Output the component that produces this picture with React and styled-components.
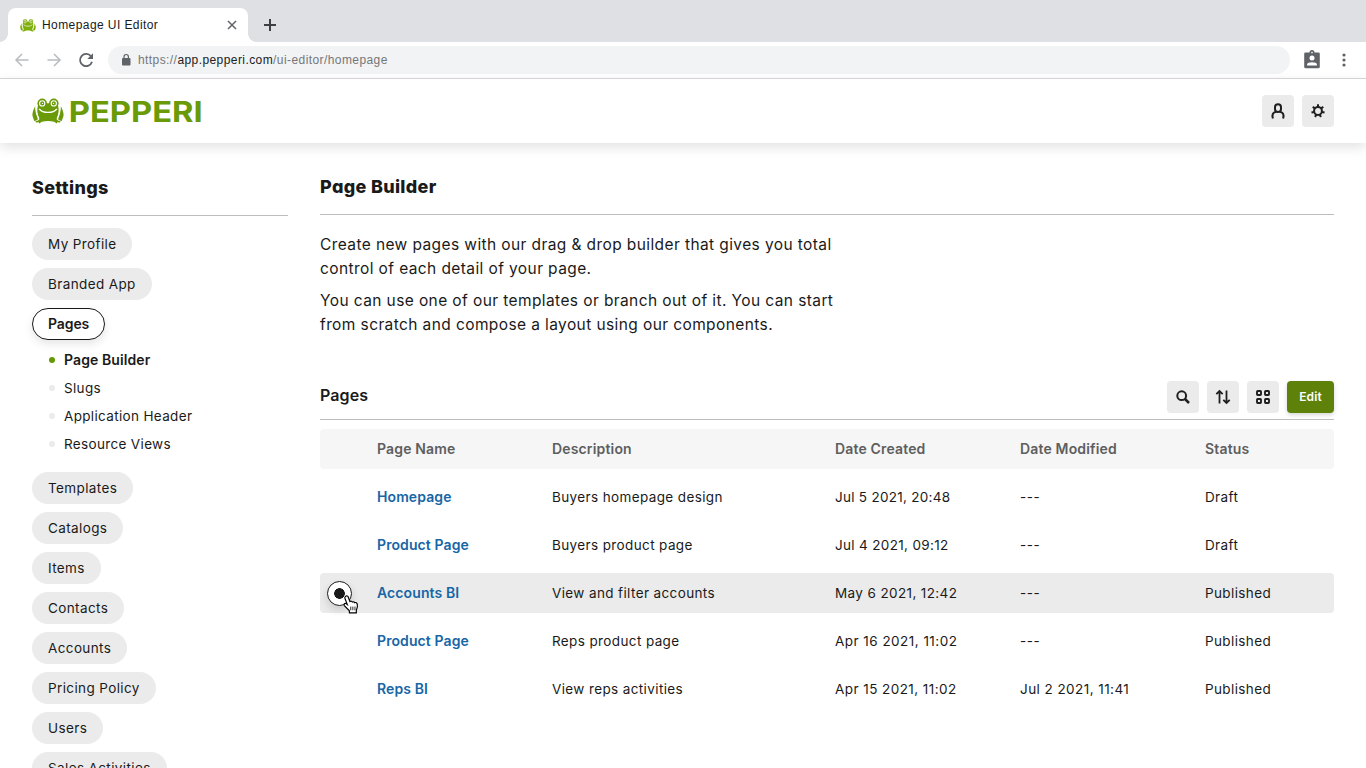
import React from 'react';
import styled, { createGlobalStyle, css } from 'styled-components';

const Global = createGlobalStyle`
  * { box-sizing: border-box; }
  html, body { margin: 0; height: 768px; overflow: hidden; background: #fff; }
  body { font-family: Inter, 'Liberation Sans', sans-serif; color: #1a1a1a; }
  h1, h2, p, ul { margin: 0; padding: 0; font-weight: inherit; }
`;

const Window = styled.div`
  width: 1366px;
  height: 768px;
  overflow: hidden;
  display: flex;
  flex-direction: column;
`;

/* Browser chrome */
const TabStrip = styled.div`
  flex: none;
  height: 42px;
  padding: 8px 0 0 8px;
  display: flex;
  align-items: flex-start;
  background: #dee0e4;
`;
const Tab = styled.div`
  position: relative;
  width: 240px;
  height: 34px;
  padding: 0 10px 0 12px;
  display: flex;
  align-items: center;
  background: #fff;
  border-radius: 8px 8px 0 0;
  &::before, &::after {
    content: '';
    position: absolute;
    bottom: 0;
    width: 8px;
    height: 8px;
  }
  &::before { left: -8px; background: radial-gradient(circle at 0 0, transparent 7.5px, #fff 8px); }
  &::after { right: -8px; background: radial-gradient(circle at 100% 0, transparent 7.5px, #fff 8px); }
`;
const TabTitle = styled.span`
  flex: 1;
  margin-left: 6px;
  font: 12px/16px 'Liberation Sans', Arial, sans-serif;
  letter-spacing: 0.42px;
  white-space: nowrap;
`;
const NewTab = styled.div`
  margin: 9px 0 0 14px;
  display: flex;
`;
const Toolbar = styled.div`
  flex: none;
  height: 37px;
  padding: 0 12px 0 12px;
  display: flex;
  align-items: center;
  background: #fff;
  border-bottom: 1px solid #d9d9db;
`;
const NavIcons = styled.div`
  width: 96px;
  display: flex;
  gap: 12px;
`;
const AddressBar = styled.div`
  width: 1182px;
  height: 28px;
  padding-left: 12px;
  display: flex;
  align-items: center;
  gap: 6px;
  border-radius: 14px;
  background: #f1f3f4;
`;
const Url = styled.span`
  font: 12px/16px 'Liberation Sans', Arial, sans-serif;
  letter-spacing: 0.42px;
  color: #757779;
  white-space: nowrap;
  b { font-weight: 400; color: #202124; }
`;
const ChromeActions = styled.div`
  margin-left: 12px;
  display: flex;
  gap: 12px;
`;

/* Application header */
const Header = styled.header`
  position: relative;
  flex: none;
  height: 64px;
  padding: 0 32px;
  display: flex;
  align-items: center;
  justify-content: space-between;
  background: #fff;
  box-shadow: 0 4px 12px rgba(0, 0, 0, 0.12);
`;
const Actions = styled.div`
  display: flex;
  gap: 8px;
`;
const IconButton = styled.button`
  width: 32px;
  height: 32px;
  padding: 0;
  border: 0;
  border-radius: 4px;
  display: flex;
  align-items: center;
  justify-content: center;
  background: #ebebeb;
`;
const EditButton = styled.button`
  width: 47px;
  height: 32px;
  padding: 0;
  border: 0;
  border-radius: 4px;
  background: #5d8109;
  box-shadow: 0 2px 4px rgba(0, 0, 0, 0.16);
  color: #fff;
  font: 600 12px/16px Inter, sans-serif;
  letter-spacing: 0.15px;
`;

const Body = styled.div`
  flex: 1;
  min-height: 0;
  padding: 0 32px;
  display: flex;
  gap: 32px;
`;
const Heading = styled.h1`
  font: 800 18px/24px Inter, sans-serif;
  font-feature-settings: 'cv11';
  letter-spacing: 0.32px;
`;

/* Sidebar */
const Sidebar = styled.aside`
  flex: none;
  width: 256px;
  padding-top: 33px;
`;
const SideTitle = styled.div`
  height: 40px;
  margin-bottom: 12px;
  border-bottom: 1px solid #bdbdbd;
`;
const PillList = styled.nav`
  display: flex;
  flex-direction: column;
  align-items: flex-start;
  gap: 8px;
`;
const Pill = styled.a`
  flex: none;
  height: 32px;
  padding: 0 16px;
  border-radius: 16px;
  background: #ebebeb;
  font-size: 13.5px;
  line-height: 32px;
  letter-spacing: 0.38px;
  white-space: nowrap;
  ${p => p.$active && css`
    padding: 0 15px;
    border: 1px solid #1a1a1a;
    background: #fff;
    line-height: 30px;
    font-size: 14px;
    font-weight: 600;
    letter-spacing: -0.1px;
    box-shadow: 0 4px 8px rgba(0, 0, 0, 0.1);
  `}
`;
const SubList = styled.div`
  padding: 0 0 6px 17px;
  margin-top: -2px;
  display: flex;
  flex-direction: column;
`;
const SubItem = styled.a`
  height: 28px;
  display: flex;
  align-items: center;
  gap: 9px;
  font-size: ${p => (p.$active ? 14 : 13.5)}px;
  line-height: 16px;
  font-weight: ${p => (p.$active ? 600 : 400)};
  letter-spacing: ${p => (p.$active ? 0.1 : 0.34)}px;
  &::before {
    content: '';
    width: 6px;
    height: 6px;
    border-radius: 50%;
    background: ${p => (p.$active ? '#669900' : '#ebebeb')};
  }
`;

/* Main column */
const Main = styled.main`
  flex: 1;
  padding-top: 32px;
`;
const MainTitle = styled.div`
  height: 40px;
  border-bottom: 1px solid #bdbdbd;
`;
const Intro = styled.div`
  padding-top: 18px;
  display: flex;
  flex-direction: column;
  gap: 8px;
  height: 158px;
  font-size: 15.5px;
  line-height: 24px;
  letter-spacing: 0.4px;
  white-space: nowrap;
`;
const ListHeader = styled.div`
  height: 47px;
  padding-top: 8px;
  display: flex;
  justify-content: space-between;
  align-items: flex-start;
  border-bottom: 1px solid #bdbdbd;
`;
const ListTitle = styled.h2`
  font: 600 16px/29px Inter, sans-serif;
  letter-spacing: 0.12px;
`;
const Table = styled.div`
  padding-top: 9px;
  display: flex;
  flex-direction: column;
  gap: 8px;
`;
const Row = styled.div`
  height: 40px;
  display: grid;
  grid-template-columns: 57px 175px 283px 185px 185px 1fr;
  align-items: center;
  border-radius: 4px;
  font-size: 13.5px;
  line-height: 16px;
  letter-spacing: 0.38px;
  white-space: nowrap;
  background: ${p => (p.$selected ? '#ebebeb' : 'transparent')};
  ${p => p.$head && css`
    background: #f6f6f6;
    color: #5e5e5e;
    font-size: 14px;
    font-weight: 600;
    letter-spacing: 0.16px;
  `}
`;
const DateCell = styled.span`
  letter-spacing: ${p => p.$tracking}px;
`;
const PageLink = styled.a`
  color: #1766a6;
  font-size: 14px;
  font-weight: 600;
  letter-spacing: 0.1px;
`;
const RadioCell = styled.div`
  position: relative;
  padding-left: 7px;
`;
const Radio = styled.div`
  width: 25px;
  height: 25px;
  border: 1px solid #1a1a1a;
  border-radius: 50%;
  background: radial-gradient(circle, #1a1a1a 5px, #fff 5.6px);
  box-shadow: 0 4px 8px rgba(0, 0, 0, 0.14);
`;
const Pointer = styled.svg`
  position: absolute;
  left: 23px;
  top: 14px;
`;

function Frog({ width, height, color = '#6a9a08' }) {
  return (
    <svg width={width} height={height} viewBox="0 0 32 26" fill={color}>
      <circle cx="10.200" cy="5.400" r="4.800" />
      <circle cx="21.800" cy="5.400" r="4.800" />
      <path d="M6 7.500C8 4.500 24 4.500 26 7.500c1.300 4 .8 9-1.200 12.500-.4 1.400.3 2.300 1.700 2.800l2.300.7-.8 1-2.600-.2-.8 1.100-2.400-1.600c-4-1.100-8.400-1.100-12.400 0l-2.400 1.600-.8-1.100-2.600.2-.8-1 2.300-.7c1.400-.5 2.100-1.400 1.700-2.800C5.200 16.500 4.700 11.500 6 7.500z" />
      <path d="M3.200 8.300C1.800 11 .4 14 .4 17c.1 2 1.400 4 1.800 6l2.800-.8c1-.8.8-1.800.4-2.800C3.900 16 3 12.500 3.200 8.300zM28.800 8.300C30.200 11 31.600 14 31.600 17c-.1 2-1.400 4-1.800 6l-2.800-.8c-1-.8-.8-1.800-.4-2.800 1.500-3.400 2.400-6.900 2.200-11.100z" />
      <g fill="none" stroke="#fff">
        <path d="M4.400 9c-.2 4 .3 7 1.900 10.300M27.600 9c.2 4-.3 7-1.900 10.300" strokeWidth=".9" />
        <circle cx="10.200" cy="5.400" r="2.600" strokeWidth="1.100" />
        <circle cx="21.800" cy="5.400" r="2.600" strokeWidth="1.100" />
        <path d="M7.200 10.800c3.600 4.800 14 4.800 17.600 0" strokeWidth="1.400" />
      </g>
      <circle cx="10.500" cy="5.400" r=".7" fill="#fff" />
      <circle cx="21.500" cy="5.400" r=".7" fill="#fff" />
    </svg>
  );
}

const Wordmark = styled.svg`
  display: block;
  text { font: 700 29px Inter, sans-serif; fill: #6a9a08; }
`;
const Brand = styled.div`
  display: flex;
  align-items: center;
  gap: 4px;
`;

const before = ['My Profile', 'Branded App'];
const after = ['Templates', 'Catalogs', 'Items', 'Contacts', 'Accounts', 'Pricing Policy', 'Users', 'Sales Activities'];
const rows = [
  { name: 'Homepage', text: 'Buyers homepage design', created: 'Jul 5 2021, 20:48', tracking: 0.28, status: 'Draft' },
  { name: 'Product Page', text: 'Buyers product page', created: 'Jul 4 2021, 09:12', tracking: 0.33, status: 'Draft' },
  { name: 'Accounts BI', text: 'View and filter accounts', created: 'May 6 2021, 12:42', tracking: 0.38, status: 'Published' },
  { name: 'Product Page', text: 'Reps product page', created: 'Apr 16 2021, 11:02', tracking: 0.47, status: 'Published' },
  { name: 'Reps BI', text: 'View reps activities', created: 'Apr 15 2021, 11:02', modified: 'Jul 2 2021, 11:41', tracking: 0.44, status: 'Published' },
];

const stroke = { fill: 'none', stroke: '#1f1f1f', strokeWidth: 2 };

export default function App() {
  return (
    <Window>
      <Global />
      <TabStrip>
        <Tab>
          <Frog width={16} height={15} color="#7fae0a" />
          <TabTitle>Homepage UI Editor</TabTitle>
          <svg width="12" height="12" viewBox="0 0 12 12" fill="none" stroke="#5f6368" strokeWidth="1.500"><path d="M2 2l8 8M10 2l-8 8" /></svg>
        </Tab>
        <NewTab><svg width="16" height="16" viewBox="0 0 16 16" stroke="#3c4043" strokeWidth="2"><path d="M8 2v12M2 8h12" /></svg></NewTab>
      </TabStrip>
      <Toolbar>
        <NavIcons>
          <svg width="20" height="20" viewBox="0 0 20 20" fill="none" stroke="#babcbe" strokeWidth="1.500"><path d="M16.500 10H4M10 4l-6 6 6 6" /></svg>
          <svg width="20" height="20" viewBox="0 0 20 20" fill="none" stroke="#babcbe" strokeWidth="1.500"><path d="M3.500 10H16M10 4l6 6-6 6" /></svg>
          <svg width="20" height="20" viewBox="0 0 20 20"><path d="M15 6.300A6.100 6.100 0 1 0 16 11.800" fill="none" stroke="#5f6368" strokeWidth="1.800" /><path d="M17 3.300V9h-5.700z" fill="#5f6368" /></svg>
        </NavIcons>
        <AddressBar>
          <svg width="12" height="14" viewBox="0 0 12 14"><rect x="2" y="5" width="8.500" height="7.500" rx="1" fill="#5f6368" /><path d="M4 5.500V3.700a2.200 2.200 0 0 1 4.400 0v1.800" fill="none" stroke="#5f6368" strokeWidth="1.200" /></svg>
          <Url>https://<b>app.pepperi.com</b>/ui-editor/homepage</Url>
        </AddressBar>
        <ChromeActions>
          <svg width="20" height="20" viewBox="0 0 20 20"><path d="M3.500 2.500h4a2.500 2.500 0 0 1 5 0h4A1.300 1.300 0 0 1 17.800 3.800v13a1.500 1.500 0 0 1-1.500 1.500H3.700a1.500 1.500 0 0 1-1.500-1.500v-13A1.300 1.300 0 0 1 3.500 2.500z" fill="#5f6368" /><circle cx="10" cy="2.600" r=".8" fill="#fff" /><circle cx="10" cy="8" r="2.500" fill="#fff" /><path d="M5 15.500v-1c0-3 10-3 10 0v1z" fill="#fff" /></svg>
          <svg width="20" height="20" viewBox="0 0 20 20" fill="#5f6368"><circle cx="10" cy="5" r="1.600" /><circle cx="10" cy="10" r="1.600" /><circle cx="10" cy="15" r="1.600" /></svg>
        </ChromeActions>
      </Toolbar>
      <Header>
        <Brand>
          <Frog width={32} height={26} />
          <Wordmark width="140" height="36" viewBox="0 0 140 36"><text x="0.700" y="28.500" textLength="134" lengthAdjust="spacingAndGlyphs">PEPPERI</text></Wordmark>
        </Brand>
        <Actions>
          <IconButton>
            <svg width="16" height="16" viewBox="0 0 16 16" {...stroke}><rect x="5" y="1.300" width="6" height="7.600" rx="3" /><path d="M2.900 15.500C1.700 11.500 3 9.300 6.200 8.700M13.100 15.500c1.200-4-.1-6.200-3.300-6.800" /></svg>
          </IconButton>
          <IconButton>
            <svg width="16" height="16" viewBox="0 0 16 16" {...stroke}><circle cx="8" cy="8" r="3.900" />{[0, 51.4, 102.8, 154.300, 205.700, 257.100, 308.600].map(a => <path key={a} d="M8 1.300v2.500" transform={`rotate(${a} 8 8)`} />)}</svg>
          </IconButton>
        </Actions>
      </Header>
      <Body>
        <Sidebar>
          <SideTitle><Heading>Settings</Heading></SideTitle>
          <PillList>
            {before.map(t => <Pill key={t}>{t}</Pill>)}
            <Pill $active>Pages</Pill>
            <SubList>
              <SubItem $active>Page Builder</SubItem>
              <SubItem>Slugs</SubItem>
              <SubItem>Application Header</SubItem>
              <SubItem>Resource Views</SubItem>
            </SubList>
            {after.map(t => <Pill key={t}>{t}</Pill>)}
          </PillList>
        </Sidebar>
        <Main>
          <MainTitle><Heading>Page Builder</Heading></MainTitle>
          <Intro>
            <p>Create new pages with our drag &amp; drop builder that gives you total<br />control of each detail of your page.</p>
            <p>You can use one of our templates or branch out of it. You can start<br />from scratch and compose a layout using our components.</p>
          </Intro>
          <ListHeader>
            <ListTitle>Pages</ListTitle>
            <Actions>
              <IconButton><svg width="16" height="16" viewBox="0 0 16 16" {...stroke}><circle cx="6.700" cy="6.700" r="4.400" /><path d="M10 10l4 4" strokeWidth="2.500" /></svg></IconButton>
              <IconButton><svg width="16" height="16" viewBox="0 0 16 16" {...stroke} strokeWidth="1.800"><path d="M4.500 14.500V2.500M1.300 5.200l3.200-3.200 3.200 3.200M11.500 1.500V13.500M8.300 10.800l3.200 3.200 3.200-3.200" /></svg></IconButton>
              <IconButton><svg width="16" height="16" viewBox="0 0 16 16" {...stroke} strokeWidth="1.900">{[[2, 2], [10, 2], [2, 10], [10, 10]].map(([x, y]) => <rect key={`${x}-${y}`} x={x} y={y} width="4" height="4" rx=".7" />)}</svg></IconButton>
              <EditButton>Edit</EditButton>
            </Actions>
          </ListHeader>
          <Table>
            <Row $head><span /><span>Page Name</span><span>Description</span><span>Date Created</span><span>Date Modified</span><span>Status</span></Row>
            {rows.map((r, i) => (
              <Row key={r.text} $selected={i === 2}>
                <RadioCell>
                  {i === 2 && <>
                    <Radio />
                    <Pointer width="17" height="20" viewBox="0 0 16 19"><path d="M2.300 1.300c1.200-.9 2.300-.2 2.700.9l1.500 4c.9-.6 1.900-.3 2.300.5.900-.5 1.800-.2 2.200.6 1.200-.5 2.200.3 2.500 1.700.5 2.300.1 3.700-.9 5.500V17H6V15L1.200 10c-.8-1.400.4-2.500 1.600-1.900L4 9 1.800 3.300c-.3-.8-.1-1.500.5-2z" fill="#fff" stroke="#000" strokeWidth="1.100" /><path d="M7.300 11v3.500M9.300 11v3.500M11.300 11v3.500" stroke="#000" strokeWidth=".8" /></Pointer>
                  </>}
                </RadioCell>
                <PageLink>{r.name}</PageLink>
                <span>{r.text}</span>
                <DateCell $tracking={r.tracking}>{r.created}</DateCell>
                <DateCell $tracking={r.modified ? r.tracking : 0.6}>{r.modified || '---'}</DateCell>
                <span>{r.status}</span>
              </Row>
            ))}
          </Table>
        </Main>
      </Body>
    </Window>
  );
}
